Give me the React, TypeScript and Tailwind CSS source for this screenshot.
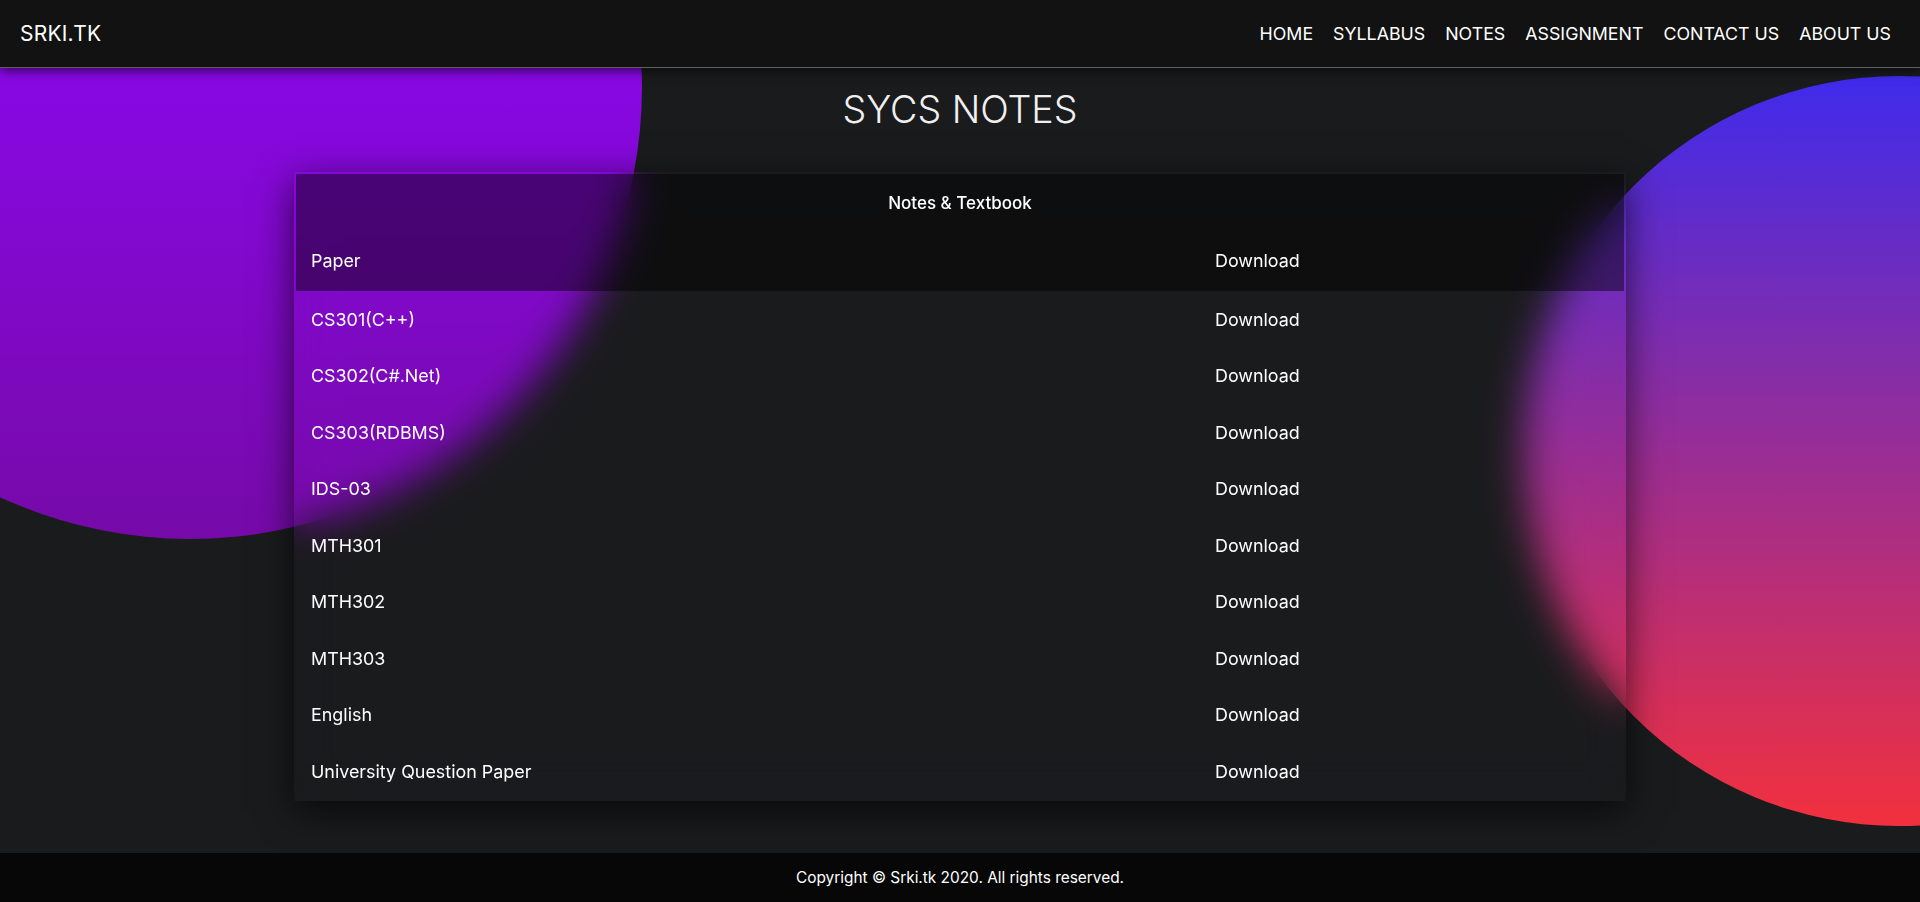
import React from "react";

const rows = [
  "CS301(C++)",
  "CS302(C#.Net)",
  "CS303(RDBMS)",
  "IDS-03",
  "MTH301",
  "MTH302",
  "MTH303",
  "English",
  "University Question Paper",
];

const links = ["HOME", "SYLLABUS", "NOTES", "ASSIGNMENT", "CONTACT US", "ABOUT US"];

export default function App() {
  return (
    <div className="relative min-h-screen overflow-hidden bg-[#1a1b1d] flex flex-col font-['Inter',sans-serif] text-white">
      {/* decorative background circles */}
      <div className="absolute left-[-262px] top-[-365px] w-[904px] h-[904px] rounded-full bg-[linear-gradient(180deg,#8a08e8_45%,#760aa8_100%)]" />
      <div className="absolute right-[-354px] top-[76px] w-[750px] h-[750px] rounded-full bg-[linear-gradient(180deg,#3f2bec,#f2303e)]" />

      <header className="relative z-10 h-[68px] shrink-0 bg-[#121212] border-b border-[#5e5e5e] shadow-[0_3px_10px_rgba(0,0,0,0.6)] flex items-center justify-between pl-5 pr-[29px]">
        <div className="text-[21px] leading-none tracking-[0.01em]">SRKI.TK</div>
        <nav className="flex items-center gap-5 text-[17.8px] leading-none">
          {links.map((l) => (
            <a key={l} className="cursor-pointer">
              {l}
            </a>
          ))}
        </nav>
      </header>

      <main className="relative flex-1 flex flex-col items-center pt-5">
        <h1 className="text-[37.6px] leading-[44px] font-light text-[#f0f0f0]">SYCS NOTES</h1>

        <div className="mt-10 w-[1332px] p-[2px] backdrop-blur-[20px] shadow-[0_10px_35px_rgba(0,0,0,0.65)] text-[17.9px] leading-[26px]">
          <div className="bg-black/45">
            <div className="h-[58px] flex items-center justify-center text-[17px] font-medium">
              Notes &amp; Textbook
            </div>
            <div className="h-[58.5px] grid grid-cols-[902px_424px] gap-x-[2px] items-center">
              <div className="px-[15px]">Paper</div>
              <div className="px-[15px]">Download</div>
            </div>
          </div>
          <div className="mt-[2px] flex flex-col gap-[2px]">
            {rows.map((r) => (
              <div key={r} className="h-[54.5px] grid grid-cols-[902px_424px] gap-x-[2px] items-center">
                <div className="px-[15px]">{r}</div>
                <div className="px-[15px]">
                  <a className="cursor-pointer">Download</a>
                </div>
              </div>
            ))}
          </div>
        </div>
      </main>

      <footer className="relative z-10 h-[49px] shrink-0 bg-[#070707] flex items-center justify-center text-[15.4px]">
        Copyright © Srki.tk 2020. All rights reserved.
      </footer>
    </div>
  );
}
